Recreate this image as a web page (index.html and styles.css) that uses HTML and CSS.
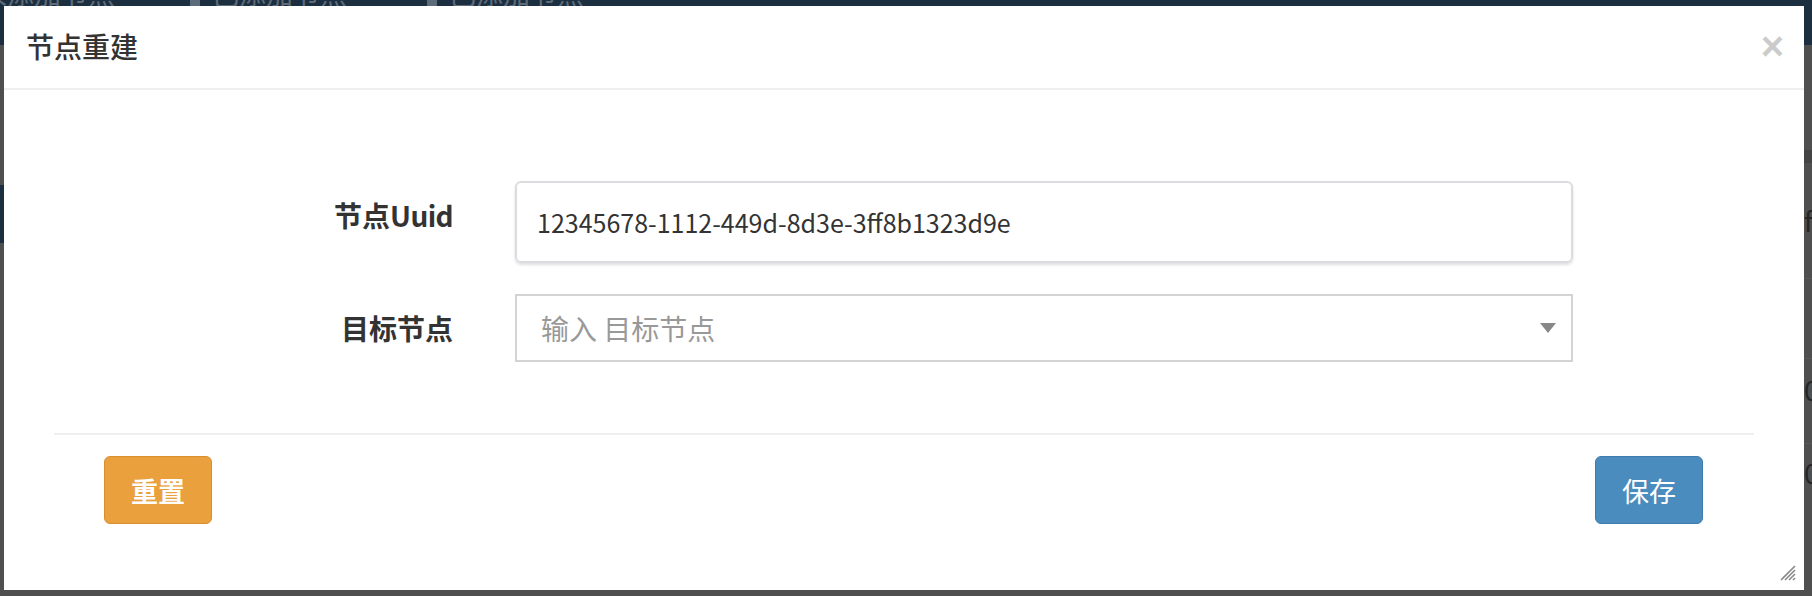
FILE: index.html
```html
<!DOCTYPE html>
<html lang="zh-CN">
<head>
<meta charset="utf-8">
<title>节点重建</title>
<link rel="stylesheet" href="styles.css">
</head>
<body>
<div class="page">
  <header class="navbar">
    <div class="nav-items">
      <span class="nav-text nav-first">未添加节点</span>
      <span class="nav-item"><span class="nav-icon"></span><span class="nav-text">已添加节点</span></span>
      <span class="nav-item"><span class="nav-icon"></span><span class="nav-text">已添加节点</span></span>
    </div>
  </header>
  <div class="page-main">
    <aside class="sidebar">
      <div class="side-gap"></div>
      <div class="side-item active"></div>
    </aside>
    <main class="content">
      <div class="edge-col">
        <div class="e-gap"></div>
        <div class="e-head"></div>
        <div class="e-row e-row-a">fa</div>
        <div class="e-row e-row-b"></div>
        <div class="e-row e-row-c">0</div>
        <div class="e-row e-row-d">0</div>
      </div>
    </main>
  </div>
</div>

<div class="modal">
  <div class="modal-header">
    <h4 class="modal-title">节点重建</h4>
    <button class="close" type="button">×</button>
  </div>
  <div class="modal-body">
    <div class="form-row">
      <label class="form-label">节点<span class="latin">Uuid</span></label>
      <div class="form-input text-input">12345678-1112-449d-8d3e-3ff8b1323d9e</div>
    </div>
    <div class="form-row">
      <label class="form-label">目标节点</label>
      <div class="form-input select-input">
        <span class="placeholder">输入 目标节点</span>
        <span class="select-arrow"></span>
      </div>
    </div>
  </div>
  <div class="modal-footer">
    <button class="btn btn-warning" type="button">重置</button>
    <button class="btn btn-primary" type="button">保存</button>
  </div>
  <svg class="resize-handle" width="16" height="16" viewBox="0 0 16 16">
    <path d="M15 1 L1 15 M15 5 L5 15 M15 9 L9 15 M15 13 L13 15" stroke="#8a8a8a" stroke-width="1.6" fill="none"/>
  </svg>
</div>
</body>
</html>
```

FILE: styles.css
```css
* { box-sizing: border-box; }

html, body {
  margin: 0;
  padding: 0;
  height: 596px;
  overflow: hidden;
}

body {
  background: #4f4f4f;
  font-family: "Noto Sans CJK SC", "Noto Sans", sans-serif;
}

/* ---------- dimmed page behind the modal ---------- */
.page {
  display: flex;
  flex-direction: column;
  height: 596px;
}

.navbar {
  height: 45px;
  background: #1c2f41;
  overflow: hidden;
  flex: none;
}

.nav-items {
  display: flex;
  align-items: flex-start;
  margin-top: -20px;
  margin-left: -20px;
  color: #5e6b78;
  font-size: 27px;
  line-height: 27px;
}

.nav-first { margin-right: 75px; }

.nav-item {
  display: flex;
  align-items: flex-end;
  gap: 12px;
  margin-right: 80px;
}

.nav-icon {
  width: 10px;
  height: 26px;
  background: #5e6b78;
  border-radius: 5px 5px 1px 1px;
}

.page-main {
  flex: 1;
  display: flex;
}

.sidebar {
  width: 220px;
  display: flex;
  flex-direction: column;
}

.side-gap { height: 140px; }

.side-item.active {
  height: 58px;
  background: #1c2f41;
}

.content {
  flex: 1;
  display: flex;
  justify-content: flex-end;
}

.edge-col {
  width: 8px;
  overflow: hidden;
  display: flex;
  flex-direction: column;
  color: #262626;
  font-size: 27px;
  line-height: 27px;
  white-space: nowrap;
}

.e-gap { height: 105px; }
.e-head { height: 13px; background: #444444; }
.e-row { border-bottom: 1px solid #585858; }
.e-row-a { height: 116px; padding-top: 44px; }
.e-row-b { height: 80px; }
.e-row-c { height: 85px; padding-top: 17px; }
.e-row-d { border-bottom: none; padding-top: 15px; }

/* ---------- modal ---------- */
.modal {
  position: fixed;
  left: 4px;
  top: 6px;
  width: 1800px;
  height: 584px;
  background: #ffffff;
  display: flex;
  flex-direction: column;
  color: #333333;
  font-family: "Noto Sans CJK SC", "Noto Sans", sans-serif;
}

.modal-header {
  height: 84px;
  flex: none;
  display: flex;
  align-items: center;
  justify-content: space-between;
  padding: 0 20px 2px 22px;
  border-bottom: 2px solid #efefef;
}

.modal-title {
  margin: 0;
  font-size: 28px;
  font-weight: 500;
  line-height: 38px;
  color: #333333;
}

.close {
  border: 0;
  background: transparent;
  padding: 0;
  margin: 0;
  font-family: "Liberation Sans", Arial, sans-serif;
  font-size: 40px;
  font-weight: bold;
  line-height: 40px;
  color: #000000;
  opacity: 0.2;
  cursor: pointer;
}

.modal-body {
  padding: 91px 0 71px;
  display: flex;
  flex-direction: column;
  gap: 31px;
}

.form-row {
  display: flex;
  align-items: flex-start;
}

.form-label {
  width: 449px;
  margin-right: 62px;
  text-align: right;
  font-weight: bold;
  font-size: 28px;
  line-height: 38px;
  padding-top: 15px;
  color: #333333;
}

.form-label .latin {
  letter-spacing: -0.6px;
}

.form-input {
  width: 1058px;
  font-size: 28px;
  display: flex;
  align-items: center;
}

.text-input {
  height: 82px;
  border: 2px solid #dcdce0;
  border-radius: 6px;
  box-shadow: 0 2px 3px rgba(0, 0, 0, 0.12);
  padding: 0 20px;
  font-size: 25px;
  color: #333333;
}

.select-input {
  height: 68px;
  border: 2px solid #d4d4d4;
  padding: 0 15px 0 24px;
  justify-content: space-between;
}

.placeholder {
  color: #999999;
}

.select-arrow {
  width: 0;
  height: 0;
  border-left: 8px solid transparent;
  border-right: 8px solid transparent;
  border-top: 10px solid #888888;
}

.modal-footer {
  margin: 0 50px;
  border-top: 2px solid #efefef;
  padding: 21px 51px 0 50px;
  display: flex;
  justify-content: space-between;
  align-items: flex-start;
}

.btn {
  height: 68px;
  padding: 0 26px;
  border-radius: 6px;
  font-family: "Noto Sans CJK SC", "Noto Sans", sans-serif;
  font-size: 27px;
  line-height: 1;
  color: #ffffff;
  cursor: pointer;
}

.btn-warning {
  background: #e9a03d;
  border: 1px solid #d8902f;
  font-weight: bold;
}

.btn-primary {
  background: #4b8cbe;
  border: 1px solid #3f7cab;
  font-weight: normal;
}

.resize-handle {
  position: absolute;
  right: 8px;
  bottom: 9px;
}
```
